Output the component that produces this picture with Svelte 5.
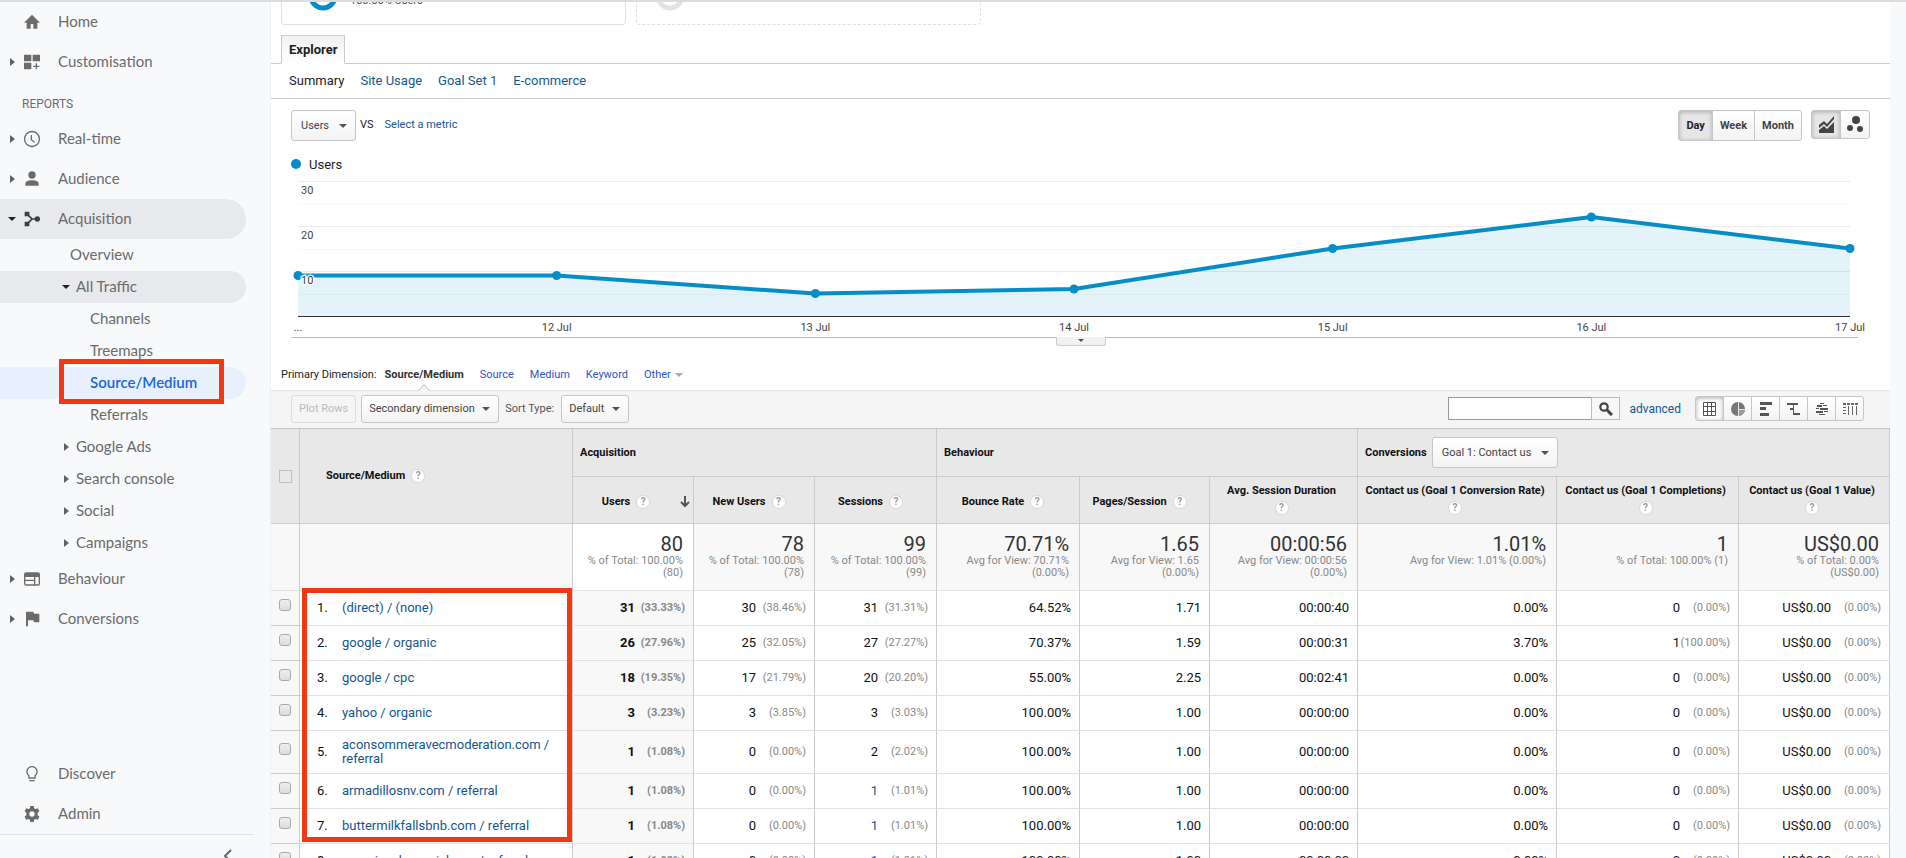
<script>
  const reportItems = [
    { label: 'Real-time', icon: 'clock' },
    { label: 'Audience', icon: 'person' }
  ];
  const acquisition = [
    { label: 'Overview', level: 'overview' },
    { label: 'All Traffic', level: 'group', open: true },
    { label: 'Channels', level: 'leaf' },
    { label: 'Treemaps', level: 'leaf' },
    { label: 'Source/Medium', level: 'leaf', active: true },
    { label: 'Referrals', level: 'leaf' },
    { label: 'Google Ads', level: 'group' },
    { label: 'Search console', level: 'group' },
    { label: 'Social', level: 'group' },
    { label: 'Campaigns', level: 'group' }
  ];

  const colWidths = [29, 273, 121, 121, 122, 143, 130, 148, 199, 182, 151];
  const columns = [
    { label: 'Users', sort: true },
    { label: 'New Users' },
    { label: 'Sessions' },
    { label: 'Bounce Rate' },
    { label: 'Pages/Session' },
    { label: 'Avg. Session Duration', stacked: true },
    { label: 'Contact us (Goal 1 Conversion Rate)', stacked: true },
    { label: 'Contact us (Goal 1 Completions)', stacked: true },
    { label: 'Contact us (Goal 1 Value)', stacked: true }
  ];
  const totals = [
    ['80', '% of Total: 100.00%', '(80)'],
    ['78', '% of Total: 100.00%', '(78)'],
    ['99', '% of Total: 100.00%', '(99)'],
    ['70.71%', 'Avg for View: 70.71%', '(0.00%)'],
    ['1.65', 'Avg for View: 1.65', '(0.00%)'],
    ['00:00:56', 'Avg for View: 00:00:56', '(0.00%)'],
    ['1.01%', 'Avg for View: 1.01% (0.00%)', ''],
    ['1', '% of Total: 100.00% (1)', ''],
    ['US$0.00', '% of Total: 0.00%', '(US$0.00)']
  ];
  const z = '(0.00%)';
  const rows = [
    { name: '(direct) / (none)', v: [['31', '(33.33%)'], ['30', '(38.46%)'], ['31', '(31.31%)'], ['64.52%'], ['1.71'], ['00:00:40'], ['0.00%'], ['0', z], ['US$0.00', z]] },
    { name: 'google / organic', v: [['26', '(27.96%)'], ['25', '(32.05%)'], ['27', '(27.27%)'], ['70.37%'], ['1.59'], ['00:00:31'], ['3.70%'], ['1', '(100.00%)'], ['US$0.00', z]] },
    { name: 'google / cpc', v: [['18', '(19.35%)'], ['17', '(21.79%)'], ['20', '(20.20%)'], ['55.00%'], ['2.25'], ['00:02:41'], ['0.00%'], ['0', z], ['US$0.00', z]] },
    { name: 'yahoo / organic', v: [['3', '(3.23%)'], ['3', '(3.85%)'], ['3', '(3.03%)'], ['100.00%'], ['1.00'], ['00:00:00'], ['0.00%'], ['0', z], ['US$0.00', z]] },
    { name: 'aconsommeravecmoderation.com / referral', v: [['1', '(1.08%)'], ['0', z], ['2', '(2.02%)'], ['100.00%'], ['1.00'], ['00:00:00'], ['0.00%'], ['0', z], ['US$0.00', z]] },
    { name: 'armadillosnv.com / referral', v: [['1', '(1.08%)'], ['0', z], ['1', '(1.01%)', true], ['100.00%'], ['1.00'], ['00:00:00'], ['0.00%'], ['0', z], ['US$0.00', z]] },
    { name: 'buttermilkfallsbnb.com / referral', v: [['1', '(1.08%)'], ['0', z], ['1', '(1.01%)', true], ['100.00%'], ['1.00'], ['00:00:00'], ['0.00%'], ['0', z], ['US$0.00', z]] },
    { name: 'gameinoxbarnerickmer / referral', v: [['1', '(1.08%)'], ['0', z], ['1', '(1.01%)', true], ['100.00%'], ['1.00'], ['00:00:00'], ['0.00%'], ['0', z], ['US$0.00', z]] }
  ];

  const series = [9, 9, 5, 6, 15, 22, 15];
  const days = ['...', '12 Jul', '13 Jul', '14 Jul', '15 Jul', '16 Jul', '17 Jul'];
  const left = 7;
  const base = 142;
  let chartWidth = $state(1567);
  let right = $derived(chartWidth - 8);
  let points = $derived(
    series.map((value, i) => ({ x: left + ((right - left) * i) / 6, y: base - value * 4.5 }))
  );
  let line = $derived(points.map((p) => `${p.x},${p.y}`).join(' '));
</script>

{#snippet icon(name)}
  <svg class="icon" viewBox="0 0 24 24" aria-hidden="true">
    {#if name === 'home'}
      <path d="M10 22v-7h4v7h6v-9h4L12 1 0 13h4v9z" />
    {:else if name === 'custom'}
      <path d="M0 1h11v10H0zM13 1h11v10H13zM0 13h11v10H0zM17.500 14h2v3.500H23v2h-3.500V23h-2v-3.500H14v-2h3.500z" />
    {:else if name === 'clock'}
      <circle cx="12" cy="12" r="11.200" fill="none" stroke="currentColor" stroke-width="2" />
      <path d="M11 6v7l5 4" fill="none" stroke="currentColor" stroke-width="2" />
    {:else if name === 'person'}
      <circle cx="12" cy="6" r="5.500" />
      <path d="M2 22v-3c0-4 6-5 10-5s10 1 10 5v3z" />
    {:else if name === 'share'}
      <path d="M1 1h7v7H1zM1 16h7v7H1z" />
      <circle cx="20" cy="12" r="4" />
      <path d="M4 4l8 8-8 8M12 12h8" fill="none" stroke="currentColor" stroke-width="2.600" />
    {:else if name === 'web'}
      <path fill-rule="evenodd" d="M3 2h18a3 3 0 0 1 3 3v14a3 3 0 0 1-3 3H3a3 3 0 0 1-3-3V5a3 3 0 0 1 3-3zM2 9v4h13V9zM2 15v5h13v-5zM17 9v11h5V9z" />
    {:else if name === 'flag'}
      <path d="M3 1h11l1 3h8v13h-8l-1-3H6v9H3z" />
    {:else if name === 'bulb'}
      <path d="M12 1a7.500 7.500 0 0 0-4.500 13.500V18h9v-3.500A7.500 7.500 0 0 0 12 1z" fill="none" stroke="currentColor" stroke-width="2" />
      <path d="M8 21h8v2H8z" />
    {:else if name === 'gear'}
      <path fill-rule="evenodd" d="M9.500 0h5l.7 3.500 2 1.100L20.600 3.400l2.600 4.400-2.700 2.400v3.600l2.700 2.400-2.600 4.400-3.400-1.200-2 1.100-.7 3.500h-5l-.7-3.500-2-1.100-3.400 1.200L.8 16.200l2.700-2.400v-3.600L.8 7.800l2.600-4.400 3.400 1.200 2-1.100zM12 8a4 4 0 1 0 0 8 4 4 0 0 0 0-8z" />
    {/if}
  </svg>
{/snippet}

{#snippet mainItem(label, name, arrow, open)}
  <a class="item" class:open href="#{label}">
    <span class="arrow-slot">{#if arrow}<i class="arrow" class:down={open}></i>{/if}</span>
    {@render icon(name)}
    <span class="text">{label}</span>
  </a>
{/snippet}

{#snippet help()}
  <button class="help" type="button" aria-label="Help">?</button>
{/snippet}

<div class="app">
  <nav class="sidebar">
    {@render mainItem('Home', 'home', false, false)}
    {@render mainItem('Customisation', 'custom', true, false)}
    <h2 class="section">REPORTS</h2>
    {#each reportItems as item}
      {@render mainItem(item.label, item.icon, true, false)}
    {/each}
    {@render mainItem('Acquisition', 'share', true, true)}
    {#each acquisition as item}
      <a class="sub {item.level}" class:open={item.open} class:active={item.active} href="#{item.label}">
        {#if item.level === 'group'}<i class="arrow" class:down={item.open}></i>{/if}
        <span class="text">{item.label}</span>
        {#if item.active}<i class="mark mark-nav"></i>{/if}
      </a>
    {/each}
    {@render mainItem('Behaviour', 'web', true, false)}
    {@render mainItem('Conversions', 'flag', true, false)}
    <div class="bottom">
      {@render mainItem('Discover', 'bulb', false, false)}
      {@render mainItem('Admin', 'gear', false, false)}
      <div class="collapse">
        <button type="button" aria-label="Collapse">
          <svg width="8" height="14" viewBox="0 0 8 14"><path d="M7 1L1 7l6 6" fill="none" stroke="#666" stroke-width="2" /></svg>
        </button>
      </div>
    </div>
  </nav>

  <main>
    <div class="segments">
      <div class="segment">
        <svg width="30" height="30" viewBox="0 0 30 30"><circle cx="15" cy="15" r="12" fill="none" stroke="#058dc7" stroke-width="5" /></svg>
        <span>100.00% Users</span>
      </div>
      <div class="segment empty">
        <svg width="30" height="30" viewBox="0 0 30 30"><circle cx="15" cy="15" r="12" fill="none" stroke="#e3e3e3" stroke-width="5" /></svg>
      </div>
    </div>

    <div class="tabs"><button class="tab" type="button">Explorer</button></div>

    <div class="subnav">
      <span>Summary</span>
      <a href="#usage">Site Usage</a>
      <a href="#goal">Goal Set 1</a>
      <a href="#ecommerce">E-commerce</a>
    </div>

    <div class="controls">
      <span class="select tall"><select aria-label="Metric"><option>Users</option></select></span>
      <span class="vs">VS</span>
      <a href="#metric">Select a metric</a>
      <div class="group days">
        <button class="on" type="button">Day</button><button type="button">Week</button><button type="button">Month</button>
      </div>
      <div class="group views">
        <button class="on" type="button" aria-label="Line chart">
          <svg width="17" height="17" viewBox="0 0 17 17"><path d="M1 9l5-4 3 3 7-8v3L9 11 6 8l-5 4z" fill="#444" /><path d="M1 14l5-4 3 3 7-7v11H1z" fill="#444" /></svg>
        </button><button type="button" aria-label="Motion chart">
          <svg width="17" height="17" viewBox="0 0 17 17"><g fill="#444"><circle cx="9" cy="4" r="4" /><circle cx="3" cy="12" r="3" /><circle cx="13" cy="13" r="3" /></g></svg>
        </button>
      </div>
    </div>

    <div class="legend"><i></i>Users</div>

    <div class="chart" bind:clientWidth={chartWidth}>
      <svg width={chartWidth} height="162">
        {#each [7, 52, 97] as y}
          <line x1={left} x2={right} y1={y + 0.5} y2={y + 0.5} stroke="#ebebeb" />
          <line x1={left} x2={right} y1={y + 23.5} y2={y + 23.5} stroke="#f7f7f7" />
        {/each}
        <polygon points="{left},{base} {line} {right},{base}" fill="#058dc7" fill-opacity="0.11" />
        <line x1={left} x2={right} y1="142.5" y2="142.5" stroke="#333" />
        <polyline points={line} fill="none" stroke="#058dc7" stroke-width="4" />
        {#each points as p, i}
          <circle cx={p.x} cy={p.y} r="4.5" fill="#058dc7" />
          <text x={p.x} y="157" text-anchor="middle">{days[i]}</text>
        {/each}
        <g class="scale">
          <text x="10" y="20">30</text>
          <text x="10" y="65">20</text>
          <text x="10" y="110">10</text>
        </g>
      </svg>
      <button class="handle" type="button" aria-label="Resize chart"></button>
    </div>

    <div class="dimensions">
      <span>Primary Dimension:</span>
      <strong>Source/Medium</strong>
      <a href="#source">Source</a>
      <a href="#medium">Medium</a>
      <a href="#keyword">Keyword</a>
      <a href="#other" class="other">Other<i></i></a>
    </div>

    <div class="toolbar">
      <button class="plot" type="button" disabled>Plot Rows</button>
      <span class="select"><select aria-label="Secondary dimension"><option>Secondary dimension</option></select></span>
      <label for="sort">Sort Type:</label>
      <span class="select"><select id="sort"><option>Default</option></select></span>
      <div class="search">
        <input type="text" aria-label="Search" /><button type="button" aria-label="Search">
          <svg width="14" height="14" viewBox="0 0 14 14"><circle cx="5" cy="5" r="3.700" fill="none" stroke="#444" stroke-width="2.200" /><path d="M8 8l5 5" stroke="#444" stroke-width="3" /></svg>
        </button>
      </div>
      <a class="advanced" href="#advanced">advanced</a>
      <div class="group tables">
        <button class="on" type="button" aria-label="Data">
          <svg viewBox="0 0 16 14"><path d="M1.500.5h12v13h-12zM5.500.5v13M9.500.5v13M1.500 4.500h12M1.500 9.500h12" fill="none" stroke="#555" /></svg>
        </button><button type="button" aria-label="Percentage">
          <svg viewBox="0 0 16 14"><circle cx="8" cy="7" r="7" fill="#777" /><path d="M8 0v7h7a7 7 0 0 1-7 7" fill="#999" /><path d="M8.500 0v14M8 7.500h7" stroke="#e5e5e5" /></svg>
        </button><button type="button" aria-label="Performance">
          <svg viewBox="0 0 16 14"><path d="M2 0h12v3H2zM2 5h6v3H2zM2 11h9v3H2z" fill="#555" /></svg>
        </button><button type="button" aria-label="Comparison">
          <svg viewBox="0 0 16 14"><path d="M1 1h11v2H1zM7 1h1v12H7zM4 6h4v2H4zM8 11h6v2H8z" fill="#555" /></svg>
        </button><button type="button" aria-label="Term cloud">
          <svg viewBox="0 0 16 14"><path d="M6 1h4v1H6zM3 3h5v2H3zM9 3h4v1H9zM2 6h3v1H2zM6 6h8v2H6zM2 9h7v2H2zM10 9h4v1h-4zM5 12h6v1H5z" fill="#555" /></svg>
        </button><button type="button" aria-label="Pivot">
          <svg viewBox="0 0 16 14"><path d="M1 1h3v2H1zM5 1h3v2H5zM9 1h3v2H9zM13 1h3v2h-3zM1 5h3v1H1zM1 8h3v1H1zM1 11h3v1H1zM6 4h1v9H6zM10 4h1v9h-1zM14 4h1v9h-1z" fill="#666" /></svg>
        </button>
      </div>
    </div>

    <table>
      <colgroup>{#each colWidths as w}<col style="width: {w}px" />{/each}</colgroup>
      <thead>
        <tr class="groups">
          <th rowspan="2" class="check"><input type="checkbox" disabled aria-label="Select all" /></th>
          <th rowspan="2" class="source">Source/Medium{@render help()}</th>
          <th colspan="3">Acquisition</th>
          <th colspan="3">Behaviour</th>
          <th colspan="3">
            <div class="conv"><label for="goal">Conversions</label>
              <span class="select tall"><select id="goal"><option>Goal 1: Contact us</option></select></span></div>
          </th>
        </tr>
        <tr class="metrics">
          {#each columns as c}
            <th class:stacked={c.stacked} class:sorted={c.sort}>
              <div class="metric">
                <span>{c.label}</span>{@render help()}
                {#if c.sort}<svg width="10" height="12" viewBox="0 0 10 12"><path d="M5 0v10M1 6l4 4 4-4" fill="none" stroke="#555" stroke-width="2" /></svg>{/if}
              </div>
            </th>
          {/each}
        </tr>
      </thead>
      <tbody>
        <tr class="totals">
          <td></td><td></td>
          {#each totals as t}
            <td><div class="big">{t[0]}</div><div>{t[1]}</div><div>{t[2]}</div></td>
          {/each}
        </tr>
        {#each rows as row, i}
          <tr class="data">
            <td class="check"><input type="checkbox" aria-label="Select row {i + 1}" /></td>
            <td class="name">
              <div><span class="index">{i + 1}.</span><a href="#row{i + 1}">{row.name}</a></div>
              {#if i === 0}<i class="mark mark-table"></i>{/if}
            </td>
            {#each row.v as cell}
              <td><div class="value"><span class:link={cell[2]}>{cell[0]}</span>{#if cell[1]}<small>{cell[1]}</small>{/if}</div></td>
            {/each}
          </tr>
        {/each}
      </tbody>
    </table>
  </main>
</div>

<style>
  :global(body) { overflow: hidden; }
  .app {
    display: flex;
    box-sizing: border-box;
    height: 100vh;
    overflow: hidden;
    padding-right: 16px;
    border-top: 2px solid #dcdcdc;
    background: #f8f9fb;
    font-family: Roboto, Arial, sans-serif;
    font-size: 11px;
    color: #222;
  }
  a { color: #15568f; text-decoration: none; }
  button, select, input { font: inherit; margin: 0; box-sizing: border-box; }
  button { cursor: pointer; }

  .sidebar {
    display: flex;
    flex-direction: column;
    flex: 0 0 270px;
    border-right: 1px solid #eeeff1;
    font-family: Lato, "Open Sans", sans-serif;
    font-size: 15px;
  }
  .item, .sub {
    display: flex;
    align-items: center;
    flex-shrink: 0;
    position: relative;
    margin-right: 24px;
    border-radius: 0 20px 20px 0;
    color: #6b6b6b;
  }
  .text { padding-bottom: 2px; }
  .item { height: 40px; }
  .item.open, .sub.open { background: #e8e9ec; }
  .item.open .icon { color: #3c4043; }
  .sub { height: 32px; }
  .overview { padding-left: 70px; }
  .group.sub { padding-left: 62px; }
  .leaf { padding-left: 90px; }
  .sub.group > .arrow { margin: 0 7px 0 2px; }
  .sub.group > .arrow.down { margin: 0 6px 0 0; }
  .sub.active { background: #e8f0fe; color: #1a66e0; font-weight: 600; }
  .icon { width: 16px; height: 16px; margin-right: 18px; fill: currentColor; overflow: visible; }
  .arrow-slot { display: flex; justify-content: center; width: 24px; }
  .arrow {
    border-left: 5px solid #5f6368;
    border-top: 4px solid transparent;
    border-bottom: 4px solid transparent;
  }
  .arrow.down {
    border: 4px solid transparent;
    border-top: 4px solid #222;
    border-bottom: 0;
  }
  .section {
    height: 36px;
    margin: 1px 0 0 22px;
    padding-top: 12px;
    box-sizing: border-box;
    font-family: Roboto, sans-serif;
    font-size: 12px;
    line-height: 18px;
    font-weight: 400;
    color: #6b6b6b;
  }
  .bottom { margin-top: auto; }
  .collapse {
    height: 24px;
    margin-right: 16px;
    padding: 13px 22px 0 0;
    box-sizing: border-box;
    border-top: 1px solid #e0e2e5;
    overflow: hidden;
    text-align: right;
  }
  .collapse button { padding: 0; border: 0; background: none; }

  .mark { position: absolute; box-sizing: border-box; border: 5px solid #f03813; z-index: 2; pointer-events: none; }
  .mark-nav { left: 59px; top: -8px; width: 165px; height: 45px; }
  .mark-table { left: 2px; right: 0; top: -3px; height: 254px; }

  main { flex: 1; min-width: 0; background: #fff; }

  .segments { display: flex; gap: 10px; height: 23px; padding-left: 10px; overflow: hidden; }
  .segment {
    display: flex;
    align-items: flex-start;
    gap: 12px;
    width: 345px;
    box-sizing: border-box;
    padding-left: 26px;
    border: 1px solid #e0e0e0;
    border-top: 0;
    border-radius: 0 0 4px 4px;
    color: #555;
  }
  .segment svg { margin-top: -21px; }
  .segment span { margin-top: -8px; line-height: 14px; }
  .segment.empty { border-style: dashed; padding-left: 18px; }

  .tabs { display: flex; margin-top: 10px; padding-left: 10px; border-bottom: 1px solid #ccc; }
  .tab {
    height: 29px;
    margin-bottom: -1px;
    padding: 0 7px;
    border: 1px solid #ccc;
    border-bottom-color: #fff;
    background: linear-gradient(#f1f1f1, #fff);
    font-size: 13px;
    font-weight: 700;
    color: #222;
  }
  .subnav { display: flex; gap: 16px; padding-left: 18px; border-bottom: 1px solid #ccc; font-size: 13px; line-height: 34px; }

  .controls { display: flex; align-items: flex-start; height: 42px; padding: 11px 20px 0; line-height: 30px; }
  .vs { margin: 0 11px 0 4px; }
  .select { position: relative; display: inline-flex; }
  .select::after {
    content: "";
    position: absolute;
    right: 9px;
    top: 50%;
    margin-top: -2px;
    border: 4px solid transparent;
    border-top-color: #555;
    border-bottom: 0;
    pointer-events: none;
  }
  .select select {
    appearance: none;
    height: 28px;
    padding: 0 23px 0 7px;
    border: 1px solid #c6c6c6;
    border-radius: 3px;
    background: linear-gradient(#fff, #f3f3f3);
    color: #444;
  }
  .select.tall select { height: 31px; padding-left: 9px; padding-right: 25px; }

  div.group { display: flex; }
  div.group button {
    margin-left: -1px;
    border: 1px solid #c6c6c6;
    background: linear-gradient(#fff, #f3f3f3);
    color: #444;
    font-weight: 700;
  }
  div.group button:first-child { border-radius: 3px 0 0 3px; }
  div.group button:last-child { border-radius: 0 3px 3px 0; }
  div.group .on { background: #e6e6e6; box-shadow: inset 0 1px 4px #aaa; color: #222; }
  .days { margin-left: auto; }
  .days button { height: 31px; padding: 0 7px; }
  .views { margin-left: 10px; }
  .views button { display: flex; align-items: center; justify-content: center; width: 30px; height: 29px; padding: 0; }

  .legend { display: flex; align-items: center; gap: 8px; height: 20px; margin-top: 2px; padding-left: 20px; font-size: 13px; }
  .legend i { width: 10px; height: 10px; border-radius: 50%; background: #058dc7; }

  .chart { position: relative; height: 163px; margin: 0 32px 0 20px; border-bottom: 1px solid #bbb; }
  .chart svg { display: block; overflow: visible; }
  .chart text { font-size: 11px; fill: #444; }
  .scale text { paint-order: stroke; stroke: #fff; stroke-width: 3px; stroke-opacity: .9; }
  .handle {
    position: absolute;
    left: 50%;
    top: 163px;
    width: 50px;
    height: 9px;
    margin-left: -19px;
    padding: 0;
    border: 1px solid #ccc;
    border-top: 0;
    border-radius: 0 0 3px 3px;
    background: #f1f1f1;
  }
  .handle::after {
    content: "";
    position: absolute;
    left: 21px;
    top: 2px;
    border: 3px solid transparent;
    border-top-color: #555;
    border-bottom: 0;
  }

  .dimensions { display: flex; gap: 16px; height: 30px; margin-top: 22px; padding-left: 10px; line-height: 30px; }
  .dimensions span { margin-right: -8px; }
  .dimensions strong { position: relative; color: #333; }
  .dimensions strong::after {
    content: "";
    position: absolute;
    left: 50%;
    bottom: -4px;
    width: 7px;
    height: 7px;
    margin-left: -4px;
    border: 1px solid #ccc;
    border-right: 0;
    border-bottom: 0;
    background: #f5f5f5;
    transform: rotate(45deg);
  }
  .dimensions a { color: #2a56c6; }
  .other { display: flex; align-items: center; gap: 4px; }
  .other i { border: 4px solid transparent; border-top-color: #aaa; border-bottom: 0; }

  .toolbar {
    display: flex;
    align-items: center;
    height: 38px;
    box-sizing: border-box;
    padding: 0 26px 2px 20px;
    border-top: 1px solid #e4e4e4;
    background: #f5f5f5;
  }
  .toolbar label { margin: 0 7px 0 6px; color: #555; }
  .plot { height: 28px; margin-right: 5px; padding: 0 7px; border: 1px solid #ddd; border-radius: 3px; background: #f5f5f5; color: #bbb; }
  .search { display: flex; margin-left: auto; margin-right: 9px; }
  .search input { width: 144px; height: 23px; padding: 0 4px; border: 1px solid #999; background: #fff; }
  .search button { display: flex; align-items: center; justify-content: center; width: 29px; height: 23px; margin-left: -1px; padding: 0; border: 1px solid #bbb; background: #f8f8f8; }
  .advanced { font-size: 12px; }
  .tables { margin-left: 15px; }
  .tables button { display: flex; align-items: center; justify-content: center; width: 29px; height: 25px; padding: 0; }
  .tables svg { width: 16px; height: 14px; }
  div.tables .on { background: #fff; }

  table { width: 100%; table-layout: fixed; border-collapse: separate; border-spacing: 0; border-top: 1px solid #c4c4c4; }
  th, td { box-sizing: border-box; padding: 0; border-right: 1px solid #ccc; border-bottom: 1px solid #e2e2e2; }
  th { border-bottom-color: #ccc; background: #e8e8e8; font-weight: 700; color: #111; }
  .groups th { height: 48px; padding-left: 7px; text-align: left; }
  .groups .check { padding: 0; text-align: center; }
  .groups .check input { appearance: none; display: inline-block; width: 13px; height: 13px; border: 1px solid #c0c0c0; vertical-align: middle; }
  .groups .source { padding-left: 26px; }
  .conv { display: flex; align-items: center; gap: 5px; }
  .conv select { font-weight: 400; }
  .help {
    width: 14px;
    height: 14px;
    margin: 0 0 0 6px;
    padding: 0;
    border: 1px solid #d8d8d8;
    border-radius: 50%;
    background: #fff;
    font-size: 10px;
    line-height: 12px;
    font-weight: 700;
    color: #999;
    vertical-align: middle;
  }
  .metrics th { height: 47px; }
  .metric { position: relative; display: flex; align-items: center; justify-content: center; padding: 3px 10px 0 0; white-space: nowrap; }
  .sorted .metric { padding-right: 14px; }
  .metric svg { position: absolute; right: 3px; top: 4px; }
  .stacked .metric { flex-direction: column; gap: 3px; padding: 0 4px 2px 0; line-height: 14px; }
  .stacked .help { margin: 0; line-height: 12px; }

  td { text-align: right; }
  .totals td { height: 67px; padding: 9px 10px 0 0; background: #f8f8f8; vertical-align: top; line-height: 12px; color: #888; }
  .totals td:nth-child(3) { background: #fff; }
  .big { font-size: 20px; line-height: 22px; color: #333; }
  .data td { height: 35px; font-size: 13px; line-height: 14px; color: #111; }
  .data td:nth-child(3) { background: #f8f8f8; font-weight: 700; }
  .data .check { background: #f8f8f8; border-bottom-color: #ccc; padding-right: 1px; text-align: center; }
  .data .check input { appearance: none; width: 12px; height: 12px; border: 1px solid #aaa; border-radius: 3px; background: linear-gradient(#eee, #ddd); vertical-align: middle; margin-bottom: 6px; }
  .data .name { position: relative; padding: 7px 10px 7px 17px; text-align: left; }
  .name div { display: flex; align-items: center; }
  .index { flex: 0 0 25px; }
  .value { display: flex; justify-content: flex-end; align-items: center; padding-right: 8px; }
  .value small { width: 50px; font-size: 11px; color: #888; }
  .link { color: #15568f; }
</style>
